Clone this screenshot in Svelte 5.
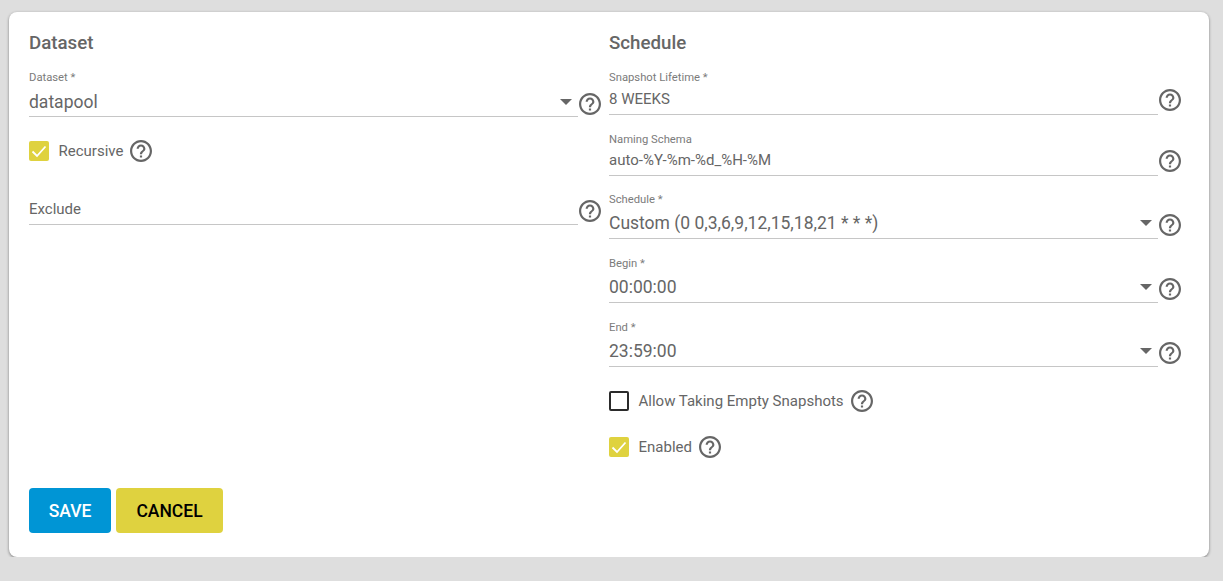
<script>
  const help = "M11 18h2v-2h-2v2zm1-16C6.48 2 2 6.48 2 12s4.48 10 10 10 10-4.48 10-10S17.52 2 12 2zm0 18c-4.41 0-8-3.59-8-8s3.59-8 8-8 8 3.59 8 8-3.59 8-8 8zm0-14c-2.21 0-4 1.79-4 4h2c0-1.1.9-2 2-2s2 .9 2 2c0 2-3 1.75-3 5h2c0-2.25 3-2.5 3-5 0-2.21-1.79-4-4-4z";
  const right = [
    { label: "Snapshot Lifetime *", value: "8 WEEKS", kind: "input", cls: "f1" },
    { label: "Naming Schema", value: "auto-%Y-%m-%d_%H-%M", kind: "input", cls: "f2" },
    { label: "Schedule *", value: "Custom (0 0,3,6,9,12,15,18,21 * * *)", kind: "select", cls: "f3 first" },
    { label: "Begin *", value: "00:00:00", kind: "select", cls: "f3" },
    { label: "End *", value: "23:59:00", kind: "select", cls: "f3" }
  ];
</script>

{#snippet helpIcon()}
  <svg class="help" viewBox="2 2 20 20" aria-hidden="true"><path d={help} /></svg>
{/snippet}

{#snippet check(on)}
  <span class="box" class:on>
    {#if on}
      <svg viewBox="0 0 20 20" aria-hidden="true"><path d="M3.5 10.5 L8 15 L16.5 5.5" /></svg>
    {/if}
  </span>
{/snippet}

{#snippet field(f)}
  <div class="row {f.cls} {f.kind}">
    <div class="field">
      <div class="label">{f.label}</div>
      <div class="value">
        <span>{f.value}</span>
        {#if f.kind === "select"}<i class="caret"></i>{/if}
      </div>
    </div>
    {@render helpIcon()}
  </div>
{/snippet}

<main class="card">
  <div class="cols">
    <section class="col">
      <h2>Dataset</h2>
      <div class="row select f0">
        <div class="field">
          <div class="label">Dataset *</div>
          <div class="value"><span>datapool</span><i class="caret"></i></div>
        </div>
        {@render helpIcon()}
      </div>
      <div class="checkrow recursive">
        {@render check(true)}
        <span class="ctext">Recursive</span>
        {@render helpIcon()}
      </div>
      <div class="row exclude">
        <div class="field">
          <div class="value placeholder"><span>Exclude</span></div>
        </div>
        {@render helpIcon()}
      </div>
    </section>
    <section class="col">
      <h2>Schedule</h2>
      {#each right as f}
        {@render field(f)}
      {/each}
      <div class="checkrow empty">
        {@render check(false)}
        <span class="ctext">Allow Taking Empty Snapshots</span>
        {@render helpIcon()}
      </div>
      <div class="checkrow enabled">
        {@render check(true)}
        <span class="ctext">Enabled</span>
        {@render helpIcon()}
      </div>
    </section>
  </div>
  <div class="actions">
    <button class="save">SAVE</button>
    <button class="cancel">CANCEL</button>
  </div>
</main>

<style>
  :global(body) {
    margin: 0;
    background: #dedede;
    font-family: Roboto, "Liberation Sans", sans-serif;
    color: #666;
  }
  .card {
    box-sizing: border-box;
    width: 1200px;
    height: 545px;
    margin: 12px 0 0 9px;
    padding: 21px 20px 24px;
    background: #fff;
    border-radius: 8px;
    box-shadow: 0 1px 3px rgba(0, 0, 0, 0.45);
    display: flex;
    flex-direction: column;
    justify-content: space-between;
  }
  .cols {
    display: flex;
  }
  .col {
    width: 580px;
    display: flex;
    flex-direction: column;
  }
  h2 {
    margin: 0;
    font-size: 18.72px;
    line-height: 21px;
    font-weight: 500;
    color: #666;
  }
  .row {
    display: flex;
    width: 572px;
    align-items: flex-end;
  }
  .field {
    flex: 1;
    min-width: 0;
    border-bottom: 1px solid #c6c6c6;
  }
  .label {
    font-size: 11.25px;
    line-height: 13px;
    color: #7b7b7b;
  }
  .value {
    display: flex;
    align-items: center;
    justify-content: space-between;
    font-size: 15px;
    line-height: 16px;
    padding: 7px 0 7px;
    color: #666;
  }
  .f2 .value {
    padding-top: 6px;
  }
  .select .value {
    font-size: 17.5px;
    line-height: 20px;
    padding: 7px 0 5px;
  }
  .f0.select .value {
    padding: 8px 0 4px;
  }
  .caret {
    width: 0;
    height: 0;
    margin-right: 6px;
    border-left: 6px solid transparent;
    border-right: 6px solid transparent;
    border-top: 6px solid #666;
  }
  .help {
    flex: none;
    display: block;
    width: 22px;
    height: 22px;
    fill: #666;
  }
  .row > .help { margin-left: 1px; }
  .f0, .f1, .f2, .f3 { margin-top: 17px; }
  .f2, .f3 { margin-top: 18px; }
  .f3.first { margin-top: 17px; }
  .f1 .help { margin-bottom: 4px; }
  .f2 .help { margin-bottom: 4px; }
  .f3 .help { margin-bottom: 3px; }
  .f0 .help { margin-bottom: 2px; }
  .exclude .help { margin-bottom: 3px; }
  .checkrow {
    display: flex;
    align-items: center;
    height: 22px;
  }
  .box {
    box-sizing: border-box;
    width: 20px;
    height: 20px;
    border-radius: 2px;
    border: 2px solid #2b2b2b;
    display: block;
    flex: none;
  }
  .box.on {
    border: 0;
    background: #dfd23f;
  }
  .box svg {
    display: block;
    width: 20px;
    height: 20px;
    fill: none;
    stroke: #fff;
    stroke-width: 1.8;
  }
  .ctext {
    margin-left: 9.5px;
    margin-right: 7px;
    font-size: 15px;
    color: #666;
  }
  .recursive { margin-top: 23px; }
  .exclude { margin-top: 32px; }
  .empty { margin-top: 23px; }
  .enabled { margin-top: 24px; }
  .actions {
    display: flex;
    gap: 5px;
  }
  button {
    height: 45px;
    border: 0;
    border-radius: 4px;
    font-family: inherit;
    font-size: 17.5px;
    font-weight: 500;
    padding: 0;
  }
  .save {
    width: 82px;
    background: #0095d5;
    color: #fff;
  }
  .cancel {
    width: 107px;
    background: #dfd23f;
    color: #000;
  }
</style>
